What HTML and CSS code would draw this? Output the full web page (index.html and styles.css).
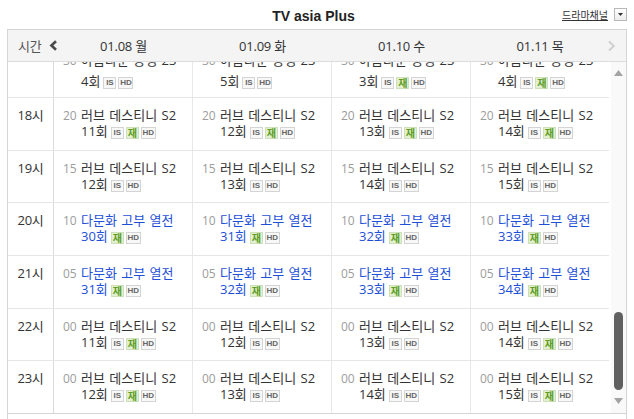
FILE: index.html
```html
<!DOCTYPE html>
<html lang="ko">
<head>
<meta charset="utf-8">
<title>TV asia Plus 편성표</title>
<link rel="stylesheet" href="styles.css">
</head>
<body>
<header class="top">
  <span class="top__spacer"></span>
  <h1 class="top__title">TV asia Plus</h1>
  <div class="top__select">
    <a class="top__link" href="#">드라마채널</a>
    <span class="top__dd"><svg width="5" height="3" viewBox="0 0 5 3"><path d="M0 0h5L2.5 3z" fill="#333"/></svg></span>
  </div>
</header>

<section class="board">
  <div class="thead">
    <div class="th th--time"><span>시간</span><svg class="chev" width="9" height="11" viewBox="0 0 9 11"><path d="M7 1.2L2.4 5.5 7 9.8" fill="none" stroke="#4a4a4a" stroke-width="2.6"/></svg></div>
    <div class="th">01.08 월</div>
    <div class="th">01.09 화</div>
    <div class="th">01.10 수</div>
    <div class="th">01.11 목</div>
    <div class="th th--next"><svg class="chev chev--next" width="9" height="12" viewBox="0 0 9 12"><path d="M2 1.5L6.8 6 2 10.5" fill="none" stroke="#cfcfcf" stroke-width="2"/></svg></div>
  </div>

  <div class="viewport">
    <div class="list">
      <div class="row row--first">
        <div class="time"></div>
        <div class="cell"><div class="entry"><span class="min">30</span><div class="prog"><div class="name">아름다운 동행 23</div><div class="ep"><span>4회</span><span class="badges"><i class="bd">IS</i><i class="bd bd--hd">HD</i></span></div></div></div></div>
        <div class="cell"><div class="entry"><span class="min">30</span><div class="prog"><div class="name">아름다운 동행 23</div><div class="ep"><span>5회</span><span class="badges"><i class="bd">IS</i><i class="bd bd--hd">HD</i></span></div></div></div></div>
        <div class="cell"><div class="entry"><span class="min">30</span><div class="prog"><div class="name">아름다운 동행 23</div><div class="ep"><span>3회</span><span class="badges"><i class="bd">IS</i><i class="bd bd--re">재</i><i class="bd bd--hd">HD</i></span></div></div></div></div>
        <div class="cell"><div class="entry"><span class="min">30</span><div class="prog"><div class="name">아름다운 동행 23</div><div class="ep"><span>4회</span><span class="badges"><i class="bd">IS</i><i class="bd bd--re">재</i><i class="bd bd--hd">HD</i></span></div></div></div></div>
      </div>

      <div class="row">
        <div class="time">18시</div>
        <div class="cell"><div class="entry"><span class="min">20</span><div class="prog"><div class="name">러브 데스티니 S2</div><div class="ep"><span>11회</span><span class="badges"><i class="bd">IS</i><i class="bd bd--re">재</i><i class="bd bd--hd">HD</i></span></div></div></div></div>
        <div class="cell"><div class="entry"><span class="min">20</span><div class="prog"><div class="name">러브 데스티니 S2</div><div class="ep"><span>12회</span><span class="badges"><i class="bd">IS</i><i class="bd bd--re">재</i><i class="bd bd--hd">HD</i></span></div></div></div></div>
        <div class="cell"><div class="entry"><span class="min">20</span><div class="prog"><div class="name">러브 데스티니 S2</div><div class="ep"><span>13회</span><span class="badges"><i class="bd">IS</i><i class="bd bd--re">재</i><i class="bd bd--hd">HD</i></span></div></div></div></div>
        <div class="cell"><div class="entry"><span class="min">20</span><div class="prog"><div class="name">러브 데스티니 S2</div><div class="ep"><span>14회</span><span class="badges"><i class="bd">IS</i><i class="bd bd--re">재</i><i class="bd bd--hd">HD</i></span></div></div></div></div>
      </div>

      <div class="row">
        <div class="time">19시</div>
        <div class="cell"><div class="entry"><span class="min">15</span><div class="prog"><div class="name">러브 데스티니 S2</div><div class="ep"><span>12회</span><span class="badges"><i class="bd">IS</i><i class="bd bd--hd">HD</i></span></div></div></div></div>
        <div class="cell"><div class="entry"><span class="min">15</span><div class="prog"><div class="name">러브 데스티니 S2</div><div class="ep"><span>13회</span><span class="badges"><i class="bd">IS</i><i class="bd bd--hd">HD</i></span></div></div></div></div>
        <div class="cell"><div class="entry"><span class="min">15</span><div class="prog"><div class="name">러브 데스티니 S2</div><div class="ep"><span>14회</span><span class="badges"><i class="bd">IS</i><i class="bd bd--hd">HD</i></span></div></div></div></div>
        <div class="cell"><div class="entry"><span class="min">15</span><div class="prog"><div class="name">러브 데스티니 S2</div><div class="ep"><span>15회</span><span class="badges"><i class="bd">IS</i><i class="bd bd--hd">HD</i></span></div></div></div></div>
      </div>

      <div class="row">
        <div class="time">20시</div>
        <div class="cell"><div class="entry entry--link"><span class="min">10</span><div class="prog"><div class="name">다문화 고부 열전</div><div class="ep"><span>30회</span><span class="badges"><i class="bd bd--re">재</i><i class="bd bd--hd">HD</i></span></div></div></div></div>
        <div class="cell"><div class="entry entry--link"><span class="min">10</span><div class="prog"><div class="name">다문화 고부 열전</div><div class="ep"><span>31회</span><span class="badges"><i class="bd bd--re">재</i><i class="bd bd--hd">HD</i></span></div></div></div></div>
        <div class="cell"><div class="entry entry--link"><span class="min">10</span><div class="prog"><div class="name">다문화 고부 열전</div><div class="ep"><span>32회</span><span class="badges"><i class="bd bd--re">재</i><i class="bd bd--hd">HD</i></span></div></div></div></div>
        <div class="cell"><div class="entry entry--link"><span class="min">10</span><div class="prog"><div class="name">다문화 고부 열전</div><div class="ep"><span>33회</span><span class="badges"><i class="bd bd--re">재</i><i class="bd bd--hd">HD</i></span></div></div></div></div>
      </div>

      <div class="row">
        <div class="time">21시</div>
        <div class="cell"><div class="entry entry--link"><span class="min">05</span><div class="prog"><div class="name">다문화 고부 열전</div><div class="ep"><span>31회</span><span class="badges"><i class="bd bd--re">재</i><i class="bd bd--hd">HD</i></span></div></div></div></div>
        <div class="cell"><div class="entry entry--link"><span class="min">05</span><div class="prog"><div class="name">다문화 고부 열전</div><div class="ep"><span>32회</span><span class="badges"><i class="bd bd--re">재</i><i class="bd bd--hd">HD</i></span></div></div></div></div>
        <div class="cell"><div class="entry entry--link"><span class="min">05</span><div class="prog"><div class="name">다문화 고부 열전</div><div class="ep"><span>33회</span><span class="badges"><i class="bd bd--re">재</i><i class="bd bd--hd">HD</i></span></div></div></div></div>
        <div class="cell"><div class="entry entry--link"><span class="min">05</span><div class="prog"><div class="name">다문화 고부 열전</div><div class="ep"><span>34회</span><span class="badges"><i class="bd bd--re">재</i><i class="bd bd--hd">HD</i></span></div></div></div></div>
      </div>

      <div class="row">
        <div class="time">22시</div>
        <div class="cell"><div class="entry"><span class="min">00</span><div class="prog"><div class="name">러브 데스티니 S2</div><div class="ep"><span>11회</span><span class="badges"><i class="bd">IS</i><i class="bd bd--re">재</i><i class="bd bd--hd">HD</i></span></div></div></div></div>
        <div class="cell"><div class="entry"><span class="min">00</span><div class="prog"><div class="name">러브 데스티니 S2</div><div class="ep"><span>12회</span><span class="badges"><i class="bd">IS</i><i class="bd bd--hd">HD</i></span></div></div></div></div>
        <div class="cell"><div class="entry"><span class="min">00</span><div class="prog"><div class="name">러브 데스티니 S2</div><div class="ep"><span>13회</span><span class="badges"><i class="bd">IS</i><i class="bd bd--hd">HD</i></span></div></div></div></div>
        <div class="cell"><div class="entry"><span class="min">00</span><div class="prog"><div class="name">러브 데스티니 S2</div><div class="ep"><span>14회</span><span class="badges"><i class="bd">IS</i><i class="bd bd--re">재</i><i class="bd bd--hd">HD</i></span></div></div></div></div>
      </div>

      <div class="row">
        <div class="time">23시</div>
        <div class="cell"><div class="entry"><span class="min">00</span><div class="prog"><div class="name">러브 데스티니 S2</div><div class="ep"><span>12회</span><span class="badges"><i class="bd">IS</i><i class="bd bd--re">재</i><i class="bd bd--hd">HD</i></span></div></div></div></div>
        <div class="cell"><div class="entry"><span class="min">00</span><div class="prog"><div class="name">러브 데스티니 S2</div><div class="ep"><span>13회</span><span class="badges"><i class="bd">IS</i><i class="bd bd--hd">HD</i></span></div></div></div></div>
        <div class="cell"><div class="entry"><span class="min">00</span><div class="prog"><div class="name">러브 데스티니 S2</div><div class="ep"><span>14회</span><span class="badges"><i class="bd">IS</i><i class="bd bd--hd">HD</i></span></div></div></div></div>
        <div class="cell"><div class="entry"><span class="min">00</span><div class="prog"><div class="name">러브 데스티니 S2</div><div class="ep"><span>15회</span><span class="badges"><i class="bd">IS</i><i class="bd bd--re">재</i><i class="bd bd--hd">HD</i></span></div></div></div></div>
      </div>
    </div>

    <div class="scrollbar">
      <svg class="scrollbar__arrow" width="9" height="6" viewBox="0 0 9 6"><path d="M4.5 0L9 6H0z" fill="#a3a3a3"/></svg>
      <div class="scrollbar__thumb"></div>
      <svg class="scrollbar__arrow scrollbar__arrow--down" width="9" height="6" viewBox="0 0 9 6"><path d="M0 0h9L4.5 6z" fill="#a3a3a3"/></svg>
    </div>
  </div>
  <div class="board__foot"></div>
</section>
</body>
</html>
```

FILE: styles.css
```css
* { box-sizing: border-box; }

html, body {
  margin: 0;
  padding: 0;
  background: #fff;
}

body {
  width: 634px;
  height: 419px;
  overflow: hidden;
  font-family: "Open Sans", "Noto Sans CJK KR", sans-serif;
  font-size: 13px;
  color: #333;
}

/* top bar */
.top {
  height: 29px;
  display: grid;
  grid-template-columns: 1fr auto 1fr;
  padding-right: 7px;
}

.top__title {
  margin: 0;
  padding-top: 8px;
  font-family: "Liberation Sans", Arial, sans-serif;
  font-size: 14px;
  line-height: 16px;
  font-weight: bold;
  color: #222;
}

.top__select {
  justify-self: end;
  display: flex;
  align-items: center;
  gap: 6px;
  margin-top: 8px;
  height: 13px;
}

.top__link {
  font-family: "Noto Sans CJK KR", sans-serif;
  font-size: 10px;
  line-height: 12px;
  color: #333;
  text-decoration: underline;
  text-underline-offset: 1px;
}

.top__dd {
  width: 13px;
  height: 13px;
  border: 1px solid #b8b8b8;
  background: linear-gradient(#ffffff, #ececec);
  display: flex;
  align-items: center;
  justify-content: center;
}

/* board */
.board {
  margin: 0 7px;
  width: 620px;
  border: 1px solid #d5d5d5;
  border-bottom: 0;
}

.thead {
  display: grid;
  grid-template-columns: 46px 139px 139px 139px 138px 17px;
  height: 32px;
  background: #f4f4f4;
  border-bottom: 1px solid #dcdcdc;
}

.th {
  display: flex;
  align-items: center;
  justify-content: center;
  font-size: 13px;
  line-height: 16px;
  color: #333;
  letter-spacing: -0.2px;
}

.th--time {
  justify-content: flex-start;
  padding-left: 10px;
  gap: 7px;
  color: #555;
  white-space: nowrap;
}

.chev { flex: none; }

.th--next {
  justify-content: flex-start;
}

.chev--next {
  margin-left: -2px;
}

.viewport {
  display: flex;
  height: 352px;
  border-bottom: 1px solid #d5d5d5;
  overflow: hidden;
}

.list {
  width: 601px;
  flex: none;
  margin-top: -32px;
}

.row {
  display: grid;
  grid-template-columns: 46px 139px 139px 139px 138px;
  height: 52.67px;
  border-bottom: 1px solid #e6e6e6;
}

.row--first {
  height: 68px;
}

.time {
  border-right: 1px solid #dadada;
  padding-top: 9px;
  text-align: center;
  line-height: 16px;
  font-size: 13px;
  color: #333;
  letter-spacing: -0.3px;
}

.cell {
  border-right: 1px solid #e8e8e8;
  padding: 9px 0 0 9px;
}

.cell:last-child {
  border-right: 0;
}

.row--first .cell {
  padding-top: 22px;
}

.row--first .ep {
  margin-top: 5px;
}

.entry {
  display: flex;
  align-items: baseline;
  gap: 5px;
}

.min {
  font-size: 12px;
  color: #9c9c9c;
  line-height: 16px;
  width: 13px;
  flex: none;
}

.name {
  line-height: 16px;
  white-space: nowrap;
  word-spacing: 1px;
}

.ep {
  display: flex;
  align-items: flex-end;
  line-height: 16px;
}

.entry--link .name,
.entry--link .ep {
  color: #1e4fd8;
}

.badges {
  display: flex;
  gap: 2px;
  margin-left: 3px;
  font-style: normal;
}

.bd {
  display: flex;
  align-items: center;
  justify-content: center;
  width: 13px;
  height: 12px;
  border: 1px solid #d4d4d4;
  background: #f8f8f8;
  font-style: normal;
  font-family: "Liberation Sans", Arial, sans-serif;
  font-weight: bold;
  font-size: 8px;
  line-height: 10px;
  color: #666;
  letter-spacing: 0;
}

.bd--hd {
  width: 15px;
}

.bd--re {
  background: #e2efd2;
  border-color: #cde0b8;
  color: #5d9d24;
  font-family: "Noto Sans CJK KR", sans-serif;
  font-weight: bold;
  font-size: 10px;
}

/* scrollbar */
.scrollbar {
  width: 17px;
  flex: none;
  border-left: 2px solid #fff;
  background: #f9f9f9;
  display: flex;
  flex-direction: column;
  align-items: center;
}

.scrollbar__arrow {
  margin-top: 8px;
  flex: none;
}

.scrollbar__thumb {
  width: 9px;
  height: 78px;
  margin-top: 236px;
  border-radius: 5px;
  background: #606060;
  flex: none;
}

.scrollbar__arrow--down {
  margin-top: 8px;
}

.board__foot {
  height: 20px;
}
```
